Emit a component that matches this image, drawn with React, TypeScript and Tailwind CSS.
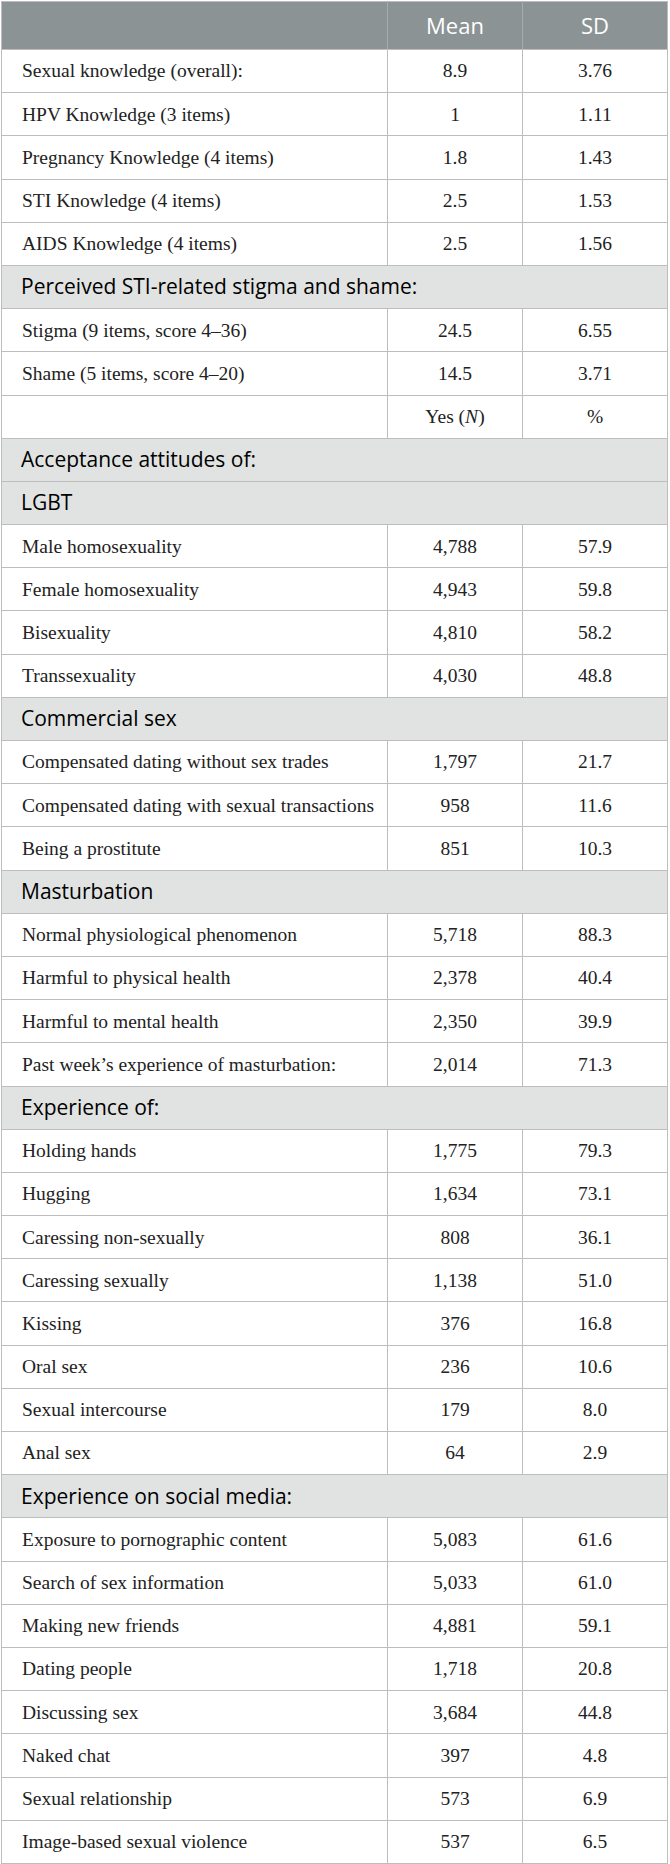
type Row =
  | { kind: "data"; label: string; a: string; b: string }
  | { kind: "section"; label: string }
  | { kind: "sub" };

const rows: Row[] = [
  { kind: "data", label: "Sexual knowledge (overall):", a: "8.9", b: "3.76" },
  { kind: "data", label: "HPV Knowledge (3 items)", a: "1", b: "1.11" },
  { kind: "data", label: "Pregnancy Knowledge (4 items)", a: "1.8", b: "1.43" },
  { kind: "data", label: "STI Knowledge (4 items)", a: "2.5", b: "1.53" },
  { kind: "data", label: "AIDS Knowledge (4 items)", a: "2.5", b: "1.56" },
  { kind: "section", label: "Perceived STI-related stigma and shame:" },
  { kind: "data", label: "Stigma (9 items, score 4–36)", a: "24.5", b: "6.55" },
  { kind: "data", label: "Shame (5 items, score 4–20)", a: "14.5", b: "3.71" },
  { kind: "sub" },
  { kind: "section", label: "Acceptance attitudes of:" },
  { kind: "section", label: "LGBT" },
  { kind: "data", label: "Male homosexuality", a: "4,788", b: "57.9" },
  { kind: "data", label: "Female homosexuality", a: "4,943", b: "59.8" },
  { kind: "data", label: "Bisexuality", a: "4,810", b: "58.2" },
  { kind: "data", label: "Transsexuality", a: "4,030", b: "48.8" },
  { kind: "section", label: "Commercial sex" },
  { kind: "data", label: "Compensated dating without sex trades", a: "1,797", b: "21.7" },
  { kind: "data", label: "Compensated dating with sexual transactions", a: "958", b: "11.6" },
  { kind: "data", label: "Being a prostitute", a: "851", b: "10.3" },
  { kind: "section", label: "Masturbation" },
  { kind: "data", label: "Normal physiological phenomenon", a: "5,718", b: "88.3" },
  { kind: "data", label: "Harmful to physical health", a: "2,378", b: "40.4" },
  { kind: "data", label: "Harmful to mental health", a: "2,350", b: "39.9" },
  { kind: "data", label: "Past week’s experience of masturbation:", a: "2,014", b: "71.3" },
  { kind: "section", label: "Experience of:" },
  { kind: "data", label: "Holding hands", a: "1,775", b: "79.3" },
  { kind: "data", label: "Hugging", a: "1,634", b: "73.1" },
  { kind: "data", label: "Caressing non-sexually", a: "808", b: "36.1" },
  { kind: "data", label: "Caressing sexually", a: "1,138", b: "51.0" },
  { kind: "data", label: "Kissing", a: "376", b: "16.8" },
  { kind: "data", label: "Oral sex", a: "236", b: "10.6" },
  { kind: "data", label: "Sexual intercourse", a: "179", b: "8.0" },
  { kind: "data", label: "Anal sex", a: "64", b: "2.9" },
  { kind: "section", label: "Experience on social media:" },
  { kind: "data", label: "Exposure to pornographic content", a: "5,083", b: "61.6" },
  { kind: "data", label: "Search of sex information", a: "5,033", b: "61.0" },
  { kind: "data", label: "Making new friends", a: "4,881", b: "59.1" },
  { kind: "data", label: "Dating people", a: "1,718", b: "20.8" },
  { kind: "data", label: "Discussing sex", a: "3,684", b: "44.8" },
  { kind: "data", label: "Naked chat", a: "397", b: "4.8" },
  { kind: "data", label: "Sexual relationship", a: "573", b: "6.9" },
  { kind: "data", label: "Image-based sexual violence", a: "537", b: "6.5" },
];

const serif = "font-['Liberation_Serif','Times_New_Roman',serif]";
const sans = "font-['Open_Sans','Noto_Sans',sans-serif]";
const cell = "border border-[#bdbdbd]";

export default function App() {
  return (
    <div className="bg-white w-[670px] pt-px pl-px">
      <table className="border-collapse table-fixed w-[666px] text-[#222]">
        <colgroup>
          <col className="w-[386px]" />
          <col className="w-[135px]" />
          <col className="w-[145px]" />
        </colgroup>
        <thead>
          <tr className="h-[48px] bg-[#8c9394] text-white">
            <th className={`${cell} border-r-[#a6acad]`}></th>
            <th className={`${cell} border-r-[#a6acad] ${sans} font-normal text-[22px] text-center`}>Mean</th>
            <th className={`${cell} ${sans} font-normal text-[22px] text-center`}>SD</th>
          </tr>
        </thead>
        <tbody>
          {rows.map((r, i) => {
            if (r.kind === "section") {
              return (
                <tr key={i} className="h-[43.2px] bg-[#e1e3e2]">
                  <td colSpan={3} className={`${cell} ${sans} text-[21px] text-black pl-[19px] whitespace-nowrap`}>
                    {r.label}
                  </td>
                </tr>
              );
            }
            if (r.kind === "sub") {
              return (
                <tr key={i} className={`h-[43.2px] ${serif} text-[19.5px]`}>
                  <td className={cell}></td>
                  <td className={`${cell} text-center`}>
                    Yes (<i>N</i>)
                  </td>
                  <td className={`${cell} text-center`}>%</td>
                </tr>
              );
            }
            return (
              <tr key={i} className={`h-[43.2px] ${serif} text-[19.5px]`}>
                <td className={`${cell} pl-[20px] whitespace-nowrap`}>{r.label}</td>
                <td className={`${cell} text-center`}>{r.a}</td>
                <td className={`${cell} text-center`}>{r.b}</td>
              </tr>
            );
          })}
        </tbody>
      </table>
    </div>
  );
}
